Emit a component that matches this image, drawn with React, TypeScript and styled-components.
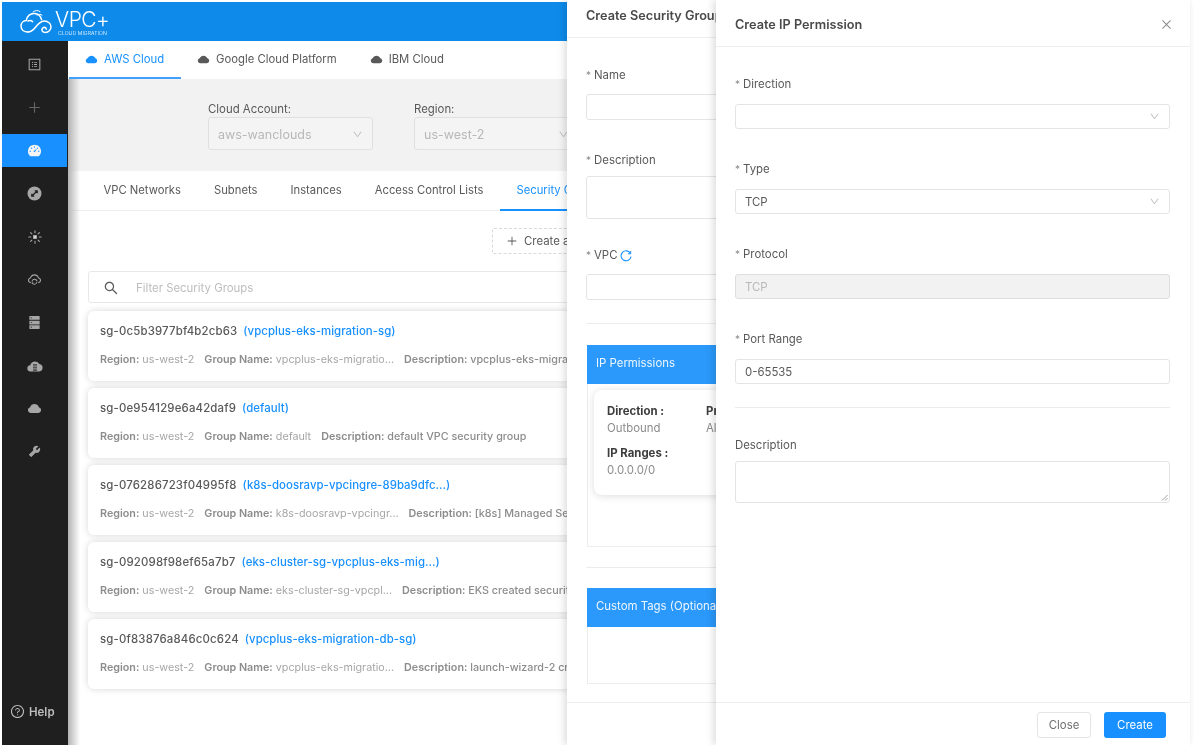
import React from "react";
import styled, { createGlobalStyle } from "styled-components";
import {
  AiFillCloud, AiFillDashboard, AiFillDatabase, AiFillTool, AiOutlineClose, AiOutlineCloudSync,
  AiOutlineDown, AiOutlinePlus, AiOutlineQuestionCircle, AiOutlineSearch, AiOutlineProfile,
} from "react-icons/ai";

const Global = createGlobalStyle`
  html, body { margin: 0; padding: 0; background: #fff; }
  body { font-family: Inter, "Liberation Sans", sans-serif; font-size: 11.4px; color: #595959; }
  * { box-sizing: border-box; }
`;

const Page = styled.div`
  position: relative; width: 1200px; height: 745px; overflow: hidden; padding: 2px 10px 0 2px;
  display: flex; flex-direction: column; background: #fff; filter: blur(0.4px);
`;
const Header = styled.header`
  flex: 0 0 39px; background: #0e8bea; display: flex; align-items: center; padding-left: 17px; gap: 0; color: #fff;
`;
const LogoWords = styled.div`display: flex; flex-direction: column; margin-top: 1px;`;
const LogoName = styled.div`font-size: 21px; font-weight: 300; line-height: 21px; letter-spacing: -0.5px;`;
const LogoSub = styled.div`font-size: 5.100px; line-height: 6px; letter-spacing: 0.1px; margin-left: 3px; white-space: nowrap; font-weight: 300;`;
const Body = styled.div`flex: 1; display: flex; min-height: 0;`;
const Sidebar = styled.nav`
  flex: 0 0 66px; background: #1f1f1f; display: flex; flex-direction: column; gap: 10px; padding-top: 7px; color: #a6a6a6;
`;
const NavItem = styled.div<{ $active?: boolean; $dim?: boolean }>`
  flex: 0 0 33px; width: 65px; display: flex; align-items: center; justify-content: center; font-size: 15px;
  background: ${(p) => (p.$active ? "#1890ff" : "transparent")};
  color: ${(p) => (p.$active ? "#f4f4f4" : p.$dim ? "#666666" : "#a6a6a6")};
`;
const Help = styled.div`
  margin-top: auto; margin-bottom: 26px; display: flex; align-items: center; gap: 4px; padding-left: 8px;
  font-size: 11.5px; font-weight: 600; color: #bdbdbd; svg { font-size: 15px; }
`;
const Main = styled.main`flex: 1; min-width: 0; display: flex; flex-direction: column; background: #fff;`;
const CloudTabs = styled.div`flex: 0 0 38px; display: flex; align-items: stretch; margin-left: 1px;`;
const CloudTab = styled.div<{ $active?: boolean }>`
  display: flex; align-items: center; gap: 6px; padding: 0 17px 0 16px; white-space: nowrap; font-size: 11.3px;
  color: ${(p) => (p.$active ? "#1890ff" : "#595959")};
  border-bottom: 2px solid ${(p) => (p.$active ? "#40a0fb" : "transparent")};
  svg { font-size: 13px; color: ${(p) => (p.$active ? "#1890ff" : "#595959")}; }
`;
const Lower = styled.div`
  position: relative; flex: 1; min-height: 0; display: flex; flex-direction: column;
  &::before {
    content: ""; position: absolute; left: 0; top: 0; bottom: 0; width: 12px; z-index: 1;
    background: linear-gradient(to right, #b4b4b4, rgba(255,255,255,0));
  }
`;
const Filters = styled.div`flex: 0 0 92px; background: #f2f2f2; display: flex; gap: 41px; padding: 23px 0 0 140px;`;
const Filter = styled.div`display: flex; flex-direction: column;`;
const FilterLabel = styled.div`line-height: 15px; color: #595959;`;
const FilterSelect = styled.div`
  width: 165px; height: 33px; border: 1px solid #e0e0e0; border-radius: 3px; background: #f4f4f4; color: #b8b8b8;
  font-size: 12.5px; display: flex; align-items: center; justify-content: space-between; padding: 1px 9px 0 9px;
  svg { font-size: 11px; color: #bfbfbf; }
`;
const SubTabs = styled.div`flex: 0 0 40px; display: flex; padding-left: 19px; border-bottom: 1px solid #ededed;`;
const SubTab = styled.div<{ $active?: boolean }>`
  display: flex; align-items: center; padding: 0 16.5px; white-space: nowrap; font-size: 11.25px;
  color: ${(p) => (p.$active ? "#1890ff" : "#595959")};
  border-bottom: 2px solid ${(p) => (p.$active ? "#1890ff" : "transparent")};
  margin-bottom: -1px;
`;
const Content = styled.div`flex: 1; min-height: 0; padding: 17px 0 0 20px; display: flex; flex-direction: column;`;
const CreateRow = styled.div`display: flex; padding-left: 404px; margin-bottom: 17px;`;
const CreateButton = styled.div`
  height: 26px; padding: 0 13px; border: 1px dashed #d9d9d9; border-radius: 2px; display: flex; align-items: center;
  gap: 6px; white-space: nowrap; svg { font-size: 12px; }
`;
const Search = styled.div`
  flex: 0 0 32px; width: 700px; border: 1px solid #e8e8e8; border-radius: 3px; display: flex; align-items: center;
  gap: 17px; padding: 1px 0 0 14px; color: #bdbdbd; margin-bottom: 8px;
  svg { font-size: 16px; color: #595959; }
`;
const Cards = styled.div`display: flex; flex-direction: column; gap: 7px; width: 700px;`;
const Card = styled.article`
  height: 70px; background: #fff; border-radius: 6px; box-shadow: 0 0 7px rgba(0,0,0,.16); padding: 12px 12px 0; white-space: nowrap;
`;
const CardTitle = styled.div`font-weight: 500; line-height: 16px; margin-bottom: 13px; letter-spacing: .17px; display: flex; gap: 6px;`;
const CardLink = styled.span`color: #1890ff; letter-spacing: .05px;`;
const CardMeta = styled.div`display: flex; gap: 10px; font-size: 10.75px; line-height: 16px; color: #a6a6a6;`;
const MetaLabel = styled.b`font-weight: 600; color: #8c8c8c;`;
const MetaStrong = styled.span`font-weight: 500; color: #8c8c8c;`;

const Drawer = styled.aside<{ $left: number }>`
  position: absolute; top: 0; bottom: 0; left: ${(p) => p.$left}px; right: 10px; background: #fff;
  box-shadow: -3px 0 7px rgba(0,0,0,.13); display: flex; flex-direction: column; overflow: visible;
`;
const DrawerHead = styled.div<{ $h: number }>`
  flex: 0 0 ${(p) => p.$h}px; display: flex; align-items: center; justify-content: space-between;
  padding: ${(p) => (p.$h > 40 ? "3px 17px 0 19px" : "0 17px 6px 19px")};
  border-bottom: 1px solid #eeeeee; font-size: 12.7px; font-weight: 600; color: #4a4a4a; white-space: nowrap;
  svg { font-size: 13px; color: #8c8c8c; }
`;
const DrawerBody = styled.div`flex: 1; min-height: 0; padding: 29px 20px 0 19px; display: flex; flex-direction: column;`;
const FieldLabel = styled.label<{ $gap: number }>`
  display: flex; align-items: center; gap: 3px; line-height: 17px; margin-bottom: ${(p) => p.$gap}px; color: #595959;
  svg { font-size: 12px; color: #1890ff; }
`;
const Star = styled.span`color: #8c8c8c; font-size: 10px;`;
const Box = styled.div<{ $h?: number; $after?: number; $disabled?: boolean }>`
  flex: 0 0 ${(p) => p.$h ?? 25}px; border: 1px solid ${(p) => (p.$disabled ? "#dedede" : "#e4e4e4")}; border-radius: 3px;
  margin-bottom: ${(p) => p.$after ?? 32}px; display: flex; align-items: center; justify-content: space-between;
  padding: 0 9px; background: ${(p) => (p.$disabled ? "#f2f2f2" : "#fff")}; color: ${(p) => (p.$disabled ? "#b8b8b8" : "#595959")};
  position: relative; svg { font-size: 11px; color: #bfbfbf; }
`;
const Rule = styled.hr<{ $after: number }>`flex: 0 0 1px; width: 100%; margin: 0 0 ${(p) => p.$after}px; border: 0; background: #ececec;`;
const Section = styled.section<{ $h: number; $after?: number }>`
  flex: 0 0 ${(p) => p.$h}px; margin-bottom: ${(p) => p.$after ?? 0}px; margin-left: 1px; border: 1px solid #ececec;
`;
const SectionHead = styled.div`
  height: 39px; margin: -1px; background: #2a99fb; color: #eef6ff; display: flex; align-items: center;
  padding: 0 0 4px 9px; white-space: nowrap;
`;
const RuleCard = styled.div`
  margin: 7px 6px 0; height: 105px; width: 400px; border-radius: 8px; box-shadow: 0 1px 8px rgba(0,0,0,.14); padding: 13px 13px;
  display: grid; grid-template-columns: 99px 1fr; grid-auto-rows: 42px; background: #fff;
`;
const Datum = styled.div`line-height: 17px; white-space: nowrap; color: #8c8c8c;`;
const DatumKey = styled.div`font-weight: 700; color: #3d3d3d;`;
const DrawerFoot = styled.div`
  flex: 0 0 43px; border-top: 1px solid #eeeeee; display: flex; align-items: flex-start; justify-content: flex-end; gap: 13px;
  padding: 9px 24px 0 0;
`;
const CloseButton = styled.div`
  width: 54px; height: 26px; border: 1px solid #e4e4e4; border-radius: 3px; display: flex; align-items: center; justify-content: center; color: #6e6e6e;
`;
const CreateSubmit = styled.div`
  width: 62px; height: 26px; border-radius: 3px; background: #1890ff; color: #fff; display: flex; align-items: center; justify-content: center;
`;
const Resize = styled.svg`position: absolute; right: 1px; bottom: 1px;`;

const Logo = () => (
  <svg width="36" height="26" viewBox="0 0 36 26" fill="none" stroke="#fff" strokeWidth="1.5" strokeLinecap="round">
    <path d="M9 23c-4 0-7-2.400-7-6 0-3 2.300-5.400 5.300-5.600C8 7 11.500 4.200 15.500 4.500c3.500.3 6.300 2.800 7 6" />
    <path d="M9 23c4 0 6-3 8.500-6s4.500-5 8-5c3.600 0 6.500 2.600 6.500 5.800S29.500 23.500 26.500 23.500c-3.400 0-4.600-3-2.600-4.600 1.500-1.100 3.400-.3 3.400 1.300" />
    <path d="M9 12c1.600-.6 3.400-.4 4.600.6" />
    <path d="M14 3c2-1.800 5-2 7-.5M18 6c1.700-1 3.700-1 5 .2" strokeWidth="1" />
  </svg>
);

const CompassIcon = () => (
  <svg width="15" height="15" viewBox="0 0 15 15">
    <circle cx="7.500" cy="7.500" r="7" fill="#a6a6a6" />
    <path d="M5 10 10 5M7.800 4.800H10.200V7.200M4.800 7.800V10.200H7.200" fill="none" stroke="#1f1f1f" strokeWidth="1.300" />
  </svg>
);
const BurstIcon = () => (
  <svg width="14" height="14" viewBox="0 0 14 14" stroke="#a6a6a6" strokeWidth="1.100" fill="#a6a6a6" strokeLinecap="round">
    <rect x="5.200" y="5.200" width="3.600" height="3.600" stroke="none" fill="#cfcfcf" />
    <path d="M7 .8v2M7 11.200v2M.8 7h2M11.200 7h2M2.600 2.600l1.300 1.300M10.100 10.100l1.300 1.300M11.400 2.600l-1.300 1.300M3.900 10.100l-1.300 1.300" />
  </svg>
);
const CloudServerIcon = () => (
  <svg width="16" height="14" viewBox="0 0 16 14">
    <path d="M3.600 12.500a3.100 3.100 0 0 1-.3-6.200A4.900 4.900 0 0 1 12.400 5a3.800 3.800 0 0 1 0 7.500z" fill="#a6a6a6" />
    <path d="M6 5h4v1.800H6zM6 7.600h4v1.800H6zM6 10.200h4V12H6z" fill="#555555" />
  </svg>
);

const cards = [
  ["sg-0c5b3977bf4b2cb63", "(vpcplus-eks-migration-sg)", "vpcplus-eks-migratio...", "vpcplus-eks-migration-sg"],
  ["sg-0e954129e6a42daf9", "(default)", "default", "default VPC security group"],
  ["sg-076286723f04995f8", "(k8s-doosravp-vpcingre-89ba9dfc...)", "k8s-doosravp-vpcingr...", "[k8s] Managed SecurityGroup"],
  ["sg-092098f98ef65a7b7", "(eks-cluster-sg-vpcplus-eks-mig...)", "eks-cluster-sg-vpcpl...", "EKS created security group"],
  ["sg-0f83876a846c0c624", "(vpcplus-eks-migration-db-sg)", "vpcplus-eks-migratio...", "launch-wizard-2 created"],
];

const navIcons = [
  <AiOutlineProfile key="a" />, <AiOutlinePlus key="b" />, <AiFillDashboard key="c" />, <CompassIcon key="d" />,
  <BurstIcon key="e" />, <AiOutlineCloudSync key="f" />, <AiFillDatabase key="g" />, <CloudServerIcon key="h" />,
  <AiFillCloud key="i" />, <AiFillTool key="j" />,
];

const Required = ({ children, gap }: { children: React.ReactNode; gap: number }) => (
  <FieldLabel $gap={gap}><Star>*</Star>{children}</FieldLabel>
);

export default function App() {
  return (
    <>
      <Global />
      <Page>
        <Header>
          <Logo />
          <LogoWords>
            <LogoName>VPC+</LogoName>
            <LogoSub>CLOUD MIGRATION</LogoSub>
          </LogoWords>
        </Header>
        <Body>
          <Sidebar>
            {navIcons.map((icon, i) => <NavItem key={i} $active={i === 2} $dim={i === 1}>{icon}</NavItem>)}
            <Help><AiOutlineQuestionCircle />Help</Help>
          </Sidebar>
          <Main>
            <CloudTabs>
              <CloudTab $active><AiFillCloud />AWS Cloud</CloudTab>
              <CloudTab><AiFillCloud />Google Cloud Platform</CloudTab>
              <CloudTab><AiFillCloud />IBM Cloud</CloudTab>
            </CloudTabs>
            <Lower>
              <Filters>
                <Filter><FilterLabel>Cloud Account:</FilterLabel><FilterSelect>aws-wanclouds<AiOutlineDown /></FilterSelect></Filter>
                <Filter><FilterLabel>Region:</FilterLabel><FilterSelect>us-west-2<AiOutlineDown /></FilterSelect></Filter>
              </Filters>
              <SubTabs>
                <SubTab>VPC Networks</SubTab>
                <SubTab>Subnets</SubTab>
                <SubTab>Instances</SubTab>
                <SubTab>Access Control Lists</SubTab>
                <SubTab $active>Security Groups</SubTab>
              </SubTabs>
              <Content>
                <CreateRow><CreateButton><AiOutlinePlus />Create a Security Group</CreateButton></CreateRow>
                <Search><AiOutlineSearch />Filter Security Groups</Search>
                <Cards>
                  {cards.map(([id, name, group, desc]) => (
                    <Card key={id}>
                      <CardTitle>{id}<CardLink>{name}</CardLink></CardTitle>
                      <CardMeta>
                        <span><MetaLabel>Region:</MetaLabel> us-west-2</span>
                        <span><MetaLabel>Group Name:</MetaLabel> {group}</span>
                        <MetaStrong><MetaLabel>Description:</MetaLabel> {desc}</MetaStrong>
                      </CardMeta>
                    </Card>
                  ))}
                </Cards>
              </Content>
            </Lower>
          </Main>
        </Body>

        <Drawer $left={567}>
          <DrawerHead $h={38}>Create Security Group</DrawerHead>
          <DrawerBody>
            <Required gap={10}>Name</Required>
            <Box $h={26} />
            <Required gap={7}>Description</Required>
            <Box $h={43} $after={28} />
            <Required gap={10}>VPC <svg width="12" height="12" viewBox="0 0 12 12" fill="none" stroke="#1890ff" strokeWidth="1.100"><path d="M10.500 3.500A5 5 0 1 0 11 6.500" /><path d="M10.700 1v2.800H8" strokeWidth="1" /></svg></Required>
            <Box $h={26} $after={23} />
            <Rule $after={21} />
            <Section $h={202} $after={20}>
              <SectionHead>IP Permissions</SectionHead>
              <RuleCard>
                <Datum><DatumKey>Direction :</DatumKey>Outbound</Datum>
                <Datum><DatumKey>Protocol :</DatumKey>All</Datum>
                <Datum><DatumKey>IP Ranges :</DatumKey>0.0.0.0/0</Datum>
              </RuleCard>
            </Section>
            <Rule $after={20} />
            <Section $h={96}>
              <SectionHead>Custom Tags (Optional)</SectionHead>
            </Section>
          </DrawerBody>
          <DrawerFoot />
        </Drawer>

        <Drawer $left={716}>
          <DrawerHead $h={47}>Create IP Permission<AiOutlineClose /></DrawerHead>
          <DrawerBody>
            <Required gap={11}>Direction</Required>
            <Box><span /><AiOutlineDown /></Box>
            <Required gap={11}>Type</Required>
            <Box>TCP<AiOutlineDown /></Box>
            <Required gap={11}>Protocol</Required>
            <Box $disabled>TCP</Box>
            <Required gap={11}>Port Range</Required>
            <Box $after={23}>0-65535</Box>
            <Rule $after={29} />
            <FieldLabel $gap={7}>Description</FieldLabel>
            <Box $h={42}>
              <Resize width="7" height="7" viewBox="0 0 7 7" stroke="#8c8c8c" strokeWidth="0.8"><path d="M1 6.500 6.500 1M4 6.500 6.500 4" /></Resize>
            </Box>
          </DrawerBody>
          <DrawerFoot>
            <CloseButton>Close</CloseButton>
            <CreateSubmit>Create</CreateSubmit>
          </DrawerFoot>
        </Drawer>
      </Page>
    </>
  );
}
